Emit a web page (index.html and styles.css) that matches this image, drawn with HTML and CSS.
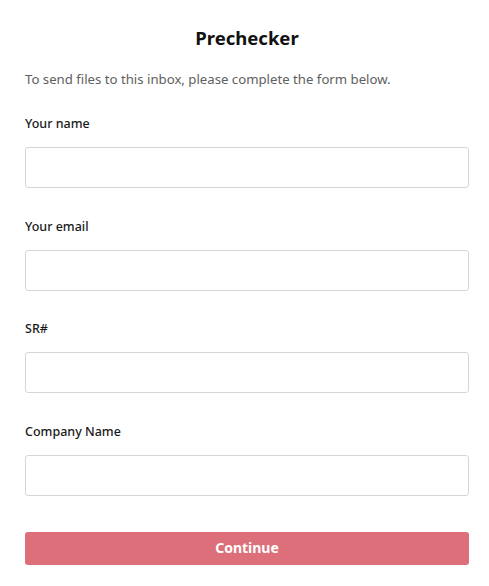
FILE: index.html
```html
<!DOCTYPE html>
<html>
<head>
<meta charset="utf-8">
<link rel="stylesheet" href="styles.css">
</head>
<body>
<main class="page">
  <h1 class="title">Prechecker</h1>
  <p class="intro">To send files to this inbox, please complete the form below.</p>
  <form class="form">
    <div class="field">
      <label class="label">Your name</label>
      <input class="input" type="text">
    </div>
    <div class="field">
      <label class="label">Your email</label>
      <input class="input" type="text">
    </div>
    <div class="field">
      <label class="label">SR#</label>
      <input class="input" type="text">
    </div>
    <div class="field">
      <label class="label">Company Name</label>
      <input class="input" type="text">
    </div>
    <button class="btn" type="button">Continue</button>
  </form>
</main>
</body>
</html>
```
FILE: styles.css
```css
html, body {
  margin: 0;
  padding: 0;
  background: #fff;
}
body {
  font-family: "Noto Sans", "Open Sans", sans-serif;
  color: #1a1a1a;
}
.page {
  padding: 26px 20px 0 25px;
}
.title {
  margin: 0;
  font-size: 18.5px;
  line-height: 24px;
  font-weight: 700;
  text-align: center;
  color: #111;
}
.intro {
  margin: 19px 0 0;
  font-size: 13.2px;
  line-height: 20px;
  color: #606060;
}
.form {
  display: flex;
  flex-direction: column;
  margin-top: 26px;
}
.field {
  display: flex;
  flex-direction: column;
  margin-bottom: 29.7px;
}
.label {
  font-size: 12.5px;
  line-height: 18px;
  font-weight: 500;
  color: #1a1a1a;
  margin-bottom: 14px;
}
.input {
  box-sizing: border-box;
  height: 41px;
  width: 100%;
  border: 1px solid #d6d6d6;
  border-radius: 3px;
  background: #fff;
  margin: 0;
  padding: 0 10px;
}
.btn {
  margin-top: 6.5px;
  height: 33px;
  padding: 0 0 2px;
  border: none;
  border-radius: 3px;
  background: #dc6f79;
  color: #fff;
  font-family: inherit;
  font-size: 14px;
  font-weight: 700;
  cursor: pointer;
}
```
